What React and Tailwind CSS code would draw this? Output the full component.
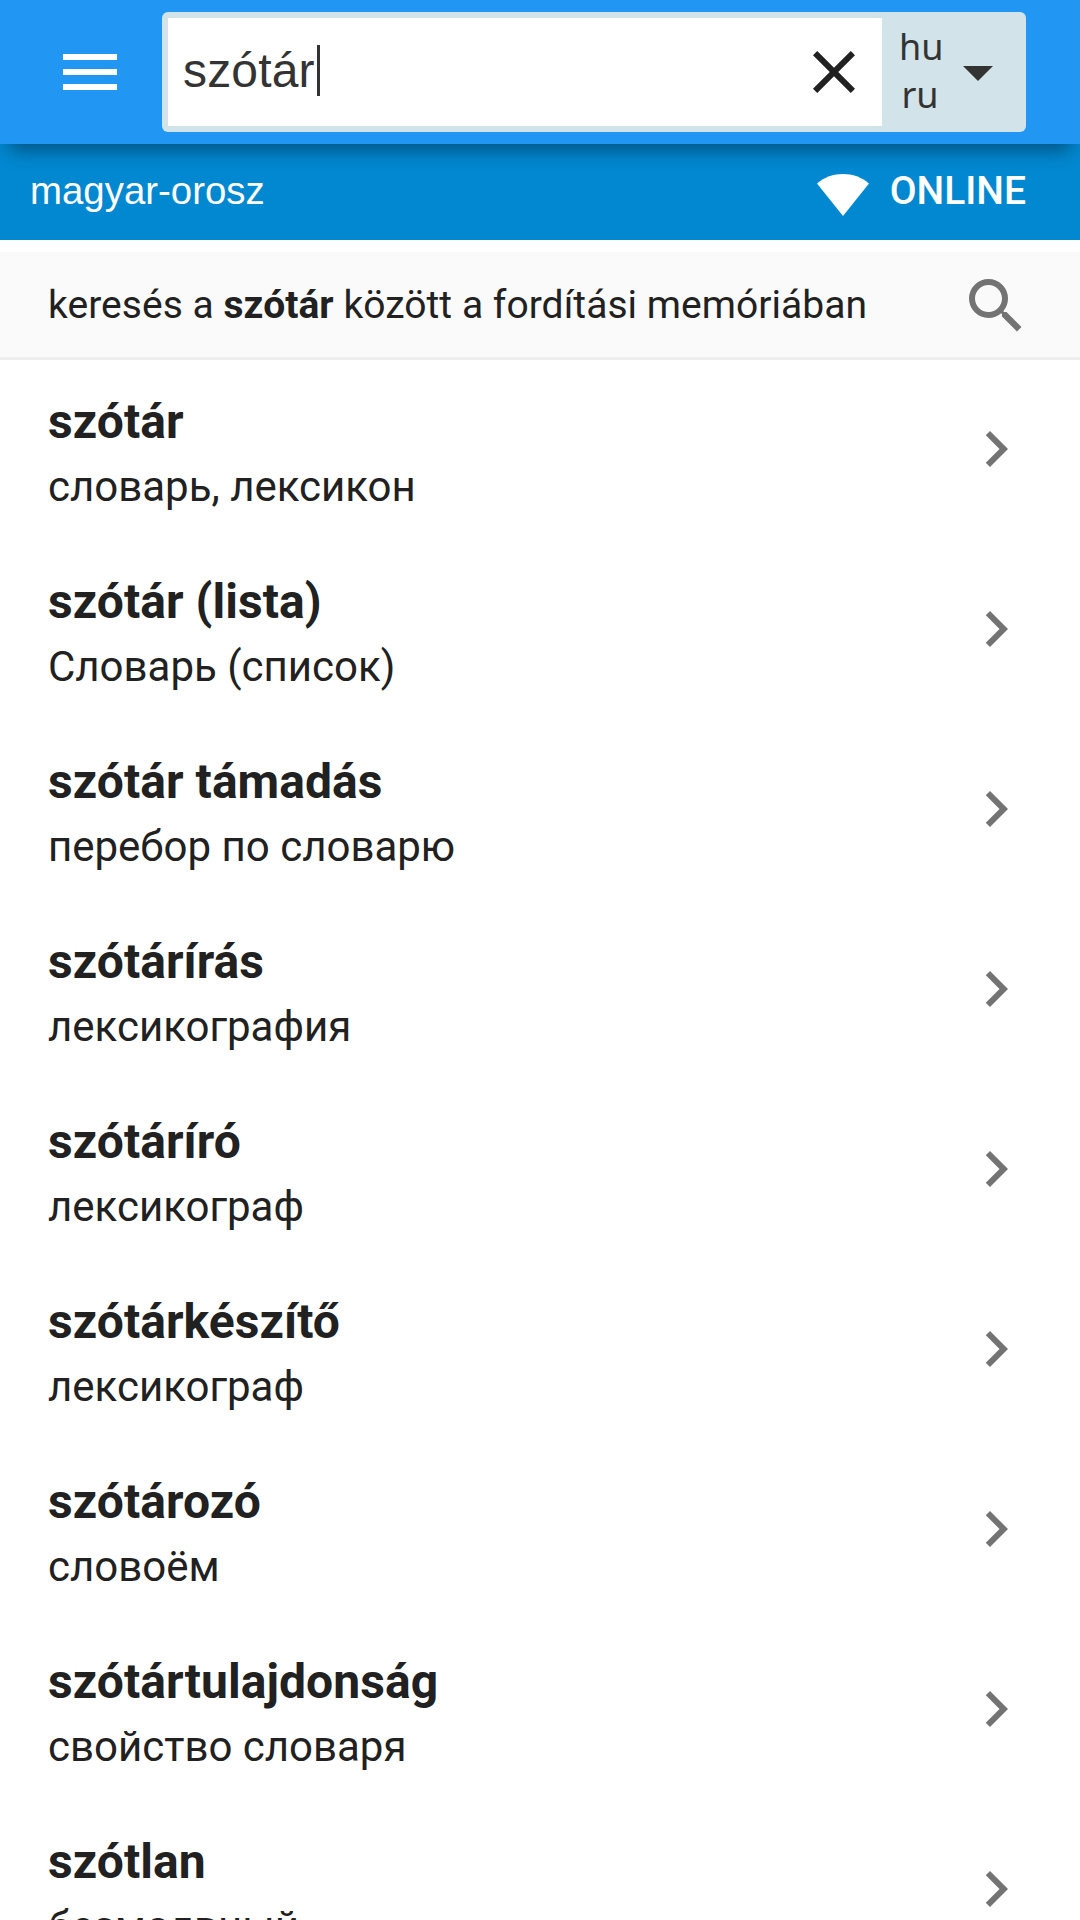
import React, { useState } from 'react';

const results = [
    { word: 'szótár', translation: 'словарь, лексикон' },
    { word: 'szótár (lista)', translation: 'Словарь (список)' },
    { word: 'szótár támadás', translation: 'перебор по словарю' },
    { word: 'szótárírás', translation: 'лексикография' },
    { word: 'szótáríró', translation: 'лексикограф' },
    { word: 'szótárkészítő', translation: 'лексикограф' },
    { word: 'szótározó', translation: 'словоём' },
    { word: 'szótártulajdonság', translation: 'свойство словаря' },
    { word: 'szótlan', translation: 'безмолвный' },
];

const Icon = ({ d, className }) => (
    <svg viewBox="0 0 24 24" fill="currentColor" className={`size-[72px] shrink-0 ${className}`}>
        <path d={d} />
    </svg>
);

const Header = ({ query, onClear }) => (
    <header className="relative z-10 flex h-36 shrink-0 items-center bg-[#2196f3] pl-[54px] pr-[54px] shadow-[0_15px_18px_-9px_rgba(0,0,0,0.4)]">
        <button type="button" aria-label="Menu">
            <Icon className="text-white" d="M3 18h18v-2H3v2zm0-5h18v-2H3v2zm0-7v2h18V6H3z" />
        </button>
        <div className="ml-9 flex h-[120px] flex-1 rounded-md bg-[#d2e4ea] py-1.5 pl-1.5">
            <div className="flex h-full w-[714px] items-center bg-white pl-[15px] pr-3">
                <span className="mb-0.5 font-['Liberation_Sans',sans-serif] text-[48px] leading-[54px] tracking-[0.15px] text-[#333]">{query}</span>
                <span className="mb-[3px] ml-0.5 h-[51px] w-[3px] bg-[#333]" />
                <button type="button" aria-label="Clear" className="ml-auto" onClick={onClear}>
                    <Icon
                        className="text-[#212121]"
                        d="M19 6.41L17.59 5 12 10.59 6.41 5 5 6.41 10.59 12 5 17.59 6.41 19 12 13.41 17.59 19 19 17.59 13.41 12z"
                    />
                </button>
            </div>
            <button type="button" className="flex flex-1 items-center pl-[17px] text-[#333]">
                <span className="mb-0.5 w-[42px] text-center font-['Noto_Sans',sans-serif] text-[36px] leading-[48px]">
                    hu
                    <br />
                    ru
                </span>
                <Icon className="ml-px" d="M7 10l5 5 5-5z" />
            </button>
        </div>
    </header>
);

const StatusBar = () => (
    <div className="flex h-24 shrink-0 items-center justify-between bg-[#0288d1] pl-[30px] pr-[54px] text-white">
        <span className="mb-0.5 font-['Liberation_Sans',sans-serif] text-[38.4px] leading-[42px]">magyar-orosz</span>
        <div className="flex items-center">
            <svg viewBox="0 0 52 42" fill="currentColor" className="mt-1.5 h-[42px] w-[52px]">
                <path d="M0 9.500C7.500 3 16.500 0 26 0s18.500 3 26 9.500L26 42z" />
            </svg>
            <span className="mb-0.5 ml-[21px] text-[39px] font-medium leading-[42px]">ONLINE</span>
        </div>
    </div>
);

const ResultRow = ({ word, translation }) => (
    <li className="flex h-[180px] shrink-0 items-center justify-between pl-12 pr-12">
        <div className="pt-[9px] text-[#212121]">
            <div className="text-[48px] font-bold leading-[64px] tracking-[0.05px]">{word}</div>
            <div className="mt-px text-[42px] leading-[64px]">{translation}</div>
        </div>
        <Icon className="mb-0.5 text-[#737373]" d="M10 6L8.590 7.410 13.170 12l-4.580 4.590L10 18l6-6z" />
    </li>
);

const App = () => {
    const [query, setQuery] = useState('szótár');

    return (
        <div className="flex h-[1920px] w-[1080px] flex-col overflow-hidden bg-white font-['Roboto',sans-serif]">
            <Header query={query} onClear={() => setQuery('')} />
            <StatusBar />
            <div className="mt-3 flex h-[108px] shrink-0 items-center justify-between border-b-[3px] border-[#eee] bg-[#fafafa] pl-12 pr-12 pt-[3px]">
                <p className="mb-0.5 whitespace-nowrap text-[39px] leading-[48px] tracking-[0.04px] text-[#212121]">
                    keresés a <b>{query}</b> között a fordítási memóriában
                </p>
                <Icon
                    className="text-[#737373]"
                    d="M15.500 14h-.790l-.280-.270A6.471 6.471 0 0 0 16 9.500 6.500 6.500 0 1 0 9.500 16c1.610 0 3.090-.590 4.230-1.570l.270.280v.790l5 4.990L20.490 19l-4.990-5zm-6 0C7.010 14 5 11.990 5 9.500S7.010 5 9.500 5 14 7.010 14 9.500 11.990 14 9.500 14z"
                />
            </div>
            <ul className="flex flex-col">
                {results.map((item) => (
                    <ResultRow key={item.word} {...item} />
                ))}
            </ul>
        </div>
    );
};

export default App;
